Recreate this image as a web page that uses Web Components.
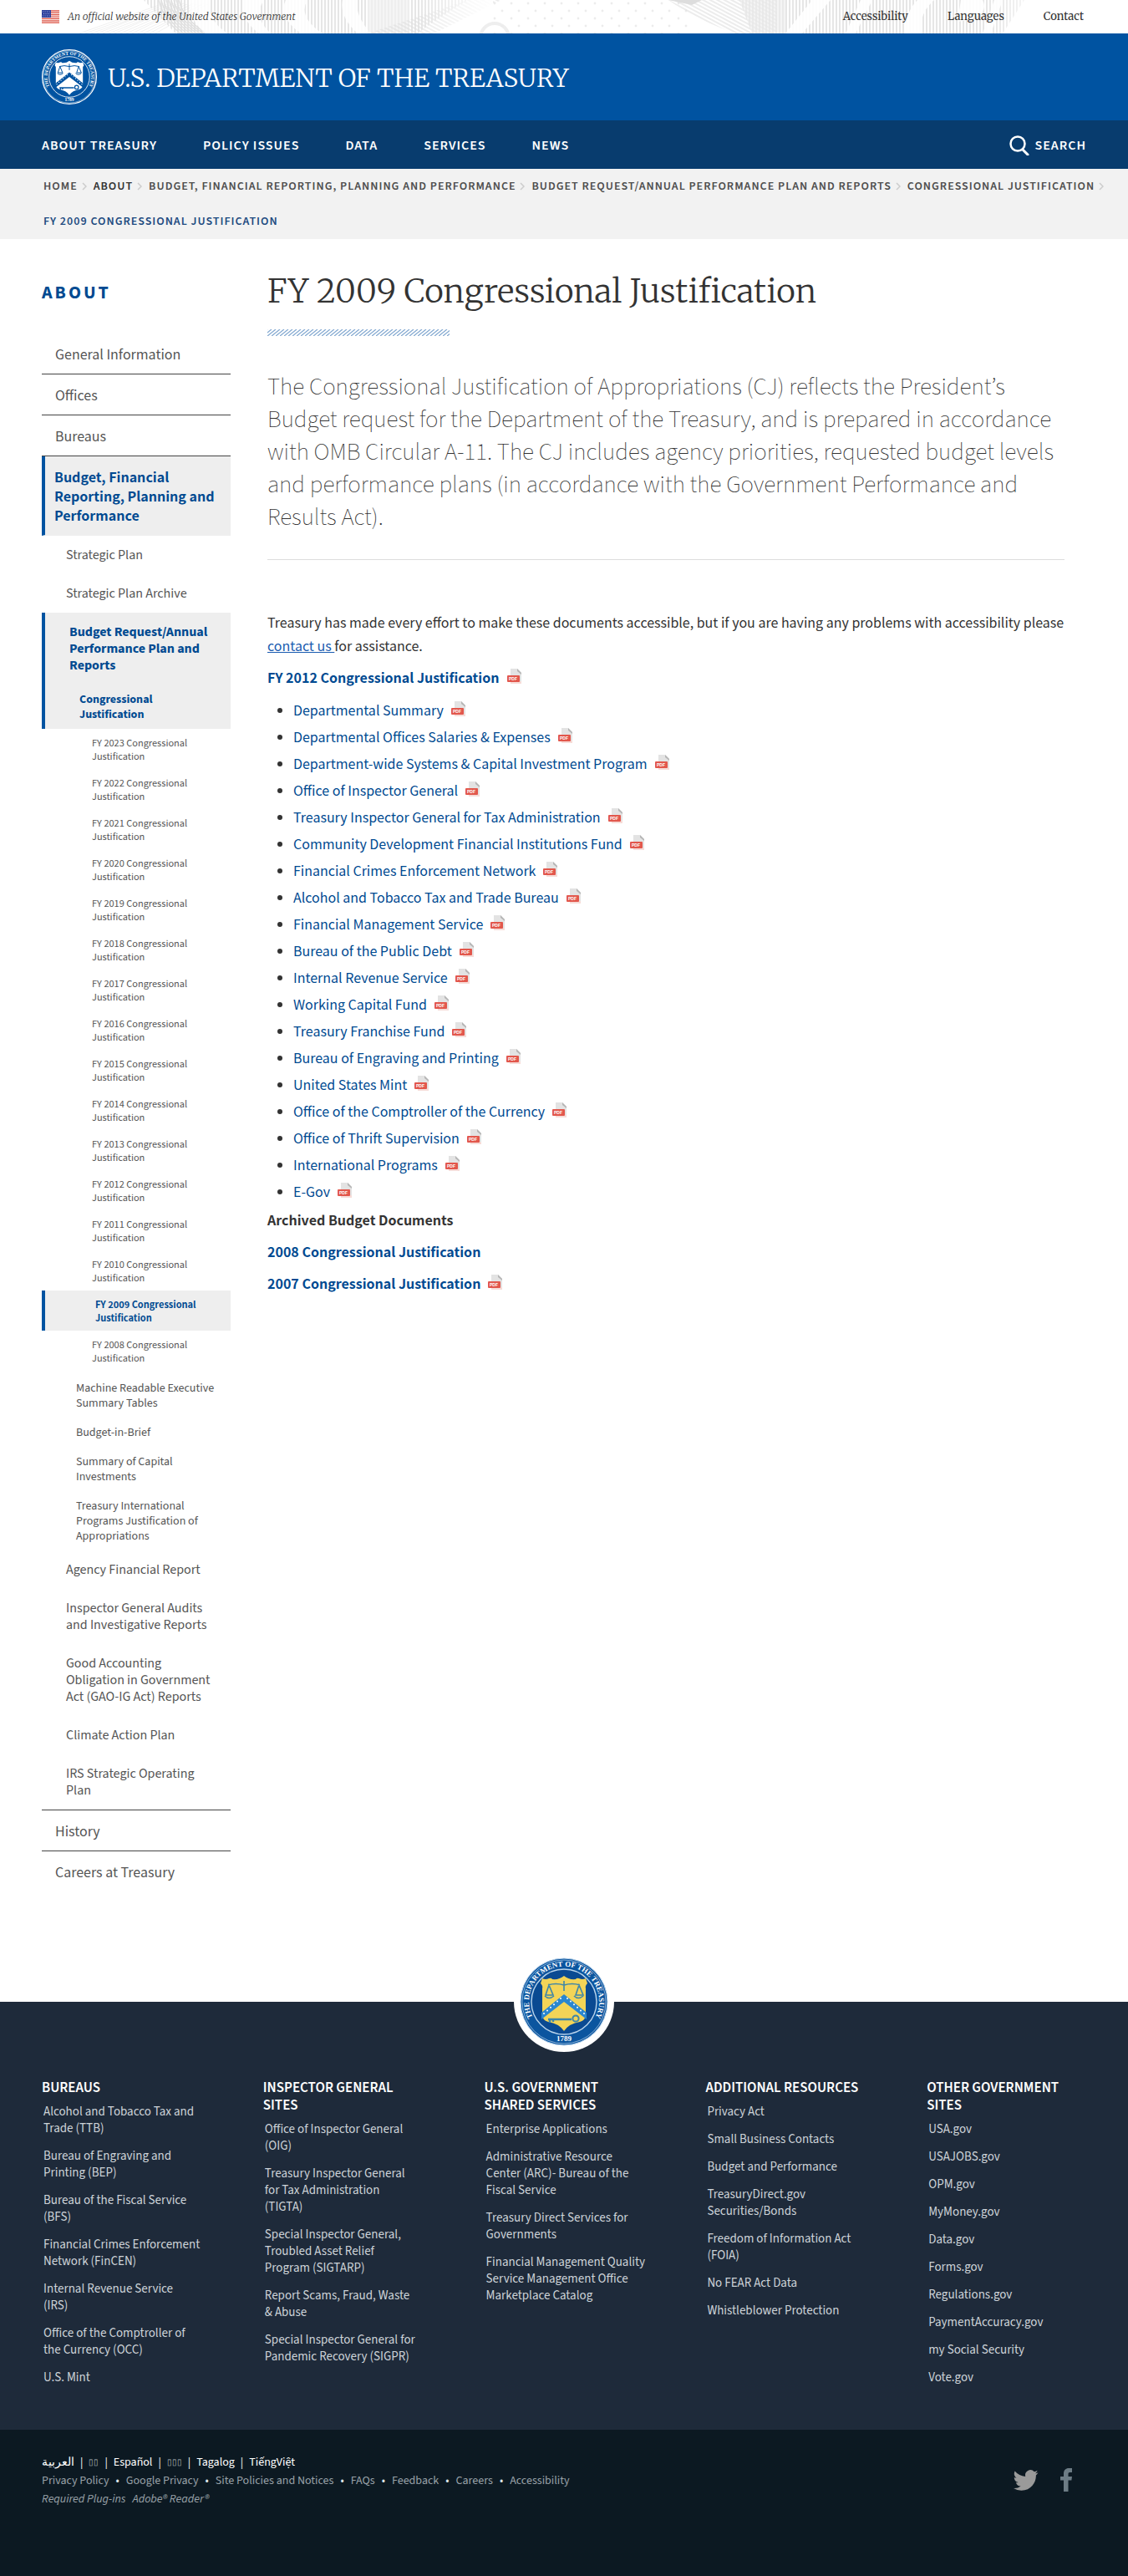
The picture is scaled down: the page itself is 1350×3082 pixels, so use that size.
<!DOCTYPE html>
<html lang="en">
<head>
<meta charset="utf-8">
<title>FY 2009 Congressional Justification | U.S. Department of the Treasury</title>
<style>
:root{
  --sans:"Source Sans 3","Noto Sans CJK SC",sans-serif;
  --body:"Noto Sans CJK SC","Source Sans 3",sans-serif;
  --serif:Merriweather,"Liberation Serif",serif;
  --link:#004a91;
}
body{margin:0;background:#fff;color:#333;font:16px/28px var(--body)}
</style>
</head>
<body>
<top-bar></top-bar>
<site-header>U.S. DEPARTMENT OF THE TREASURY</site-header>
<main-nav></main-nav>
<bread-crumbs></bread-crumbs>
<page-layout>
  <side-nav slot="side"></side-nav>
  <page-article slot="main"></page-article>
</page-layout>
<site-footer></site-footer>
<legal-bar></legal-bar>

<script>
const define = (name, html) => customElements.define(name, class extends HTMLElement {
  connectedCallback() {
    if (this.shadowRoot) return;
    const t = document.createElement('template');
    t.innerHTML = typeof html === 'function' ? html(this) : html;
    this.attachShadow({mode: 'open'}).append(t.content.cloneNode(true));
  }
});

/* Department seal: ring text, shield with scales, chevron and key */
define('treasury-seal', el => {
  const mono = el.hasAttribute('mono');
  const ring = mono ? '#0053a1' : '#0b559f', line = mono ? '#fff' : '#b9d4ec', gold = mono ? '#fff' : '#f3d457',
        ink = mono ? '#0053a1' : '#3f86a8', bar = mono ? '#0053a1' : '#2a86d0';
  let stars = '';
  for (let i = 0; i < 6; i++) {
    stars += `<circle cx="${29 + i * 4}" cy="${67 - i * 3.6}" r="1"/><circle cx="${77 - i * 4}" cy="${67 - i * 3.6}" r="1"/>`;
  }
  return `<style>:host{display:block}svg{display:block;width:100%;height:auto}text{font-family:"Liberation Serif",serif;font-weight:700;fill:#fff}</style>
  <svg viewBox="0 0 106 106" role="img" aria-label="Treasury seal">
    <defs><path id="a" d="M22 81A42 42 0 1 1 84 81"/></defs>
    <circle cx="53" cy="53" r="52" fill="${ring}" stroke="${line}" stroke-width="${mono ? 2 : 1}"/>
    <circle cx="53" cy="53" r="50" fill="none" stroke="${line}" stroke-width=".7"/>
    <circle cx="53" cy="53" r="39" fill="${mono ? ring : '#0a4a92'}" stroke="${line}" stroke-width="1.4"/>
    <text font-size="9"><textPath href="#a" startOffset="50%" text-anchor="middle">THE DEPARTMENT OF THE TREASURY</textPath></text>
    <text x="53" y="100" font-size="9" text-anchor="middle">1789</text>
    <path d="M27 25q4 2 8 0q3-1 4 1q8 1 14-4q6 5 14 4q1-2 4-1q4 2 8 0l2 6q-3 3-2 6v31q0 7-7 9q-13 2-19 11q-6-9-19-11q-7-2-7-9V37q1-3-2-6z" fill="${gold}"/>
    <path d="M26 66 53 44 80 66v8L53 53 26 74z" fill="${bar}"/>
    <g fill="#fff">${stars}</g>
    <g fill="none" stroke="${ink}" stroke-width="1.6"><path d="M34 33q9-3 19 0 10-3 19 0M53 28v12M35 33l-4 12h9zM71 33l-4 12h9z"/><path d="M30 46q5 5 11 0M65 46q5 5 11 0"/><path d="M34 74h28M36 74v4M40 74v3" stroke-width="2.4"/><circle cx="67" cy="73" r="3.6" stroke-width="2"/></g>
  </svg>`;
});

define('top-bar', () => {
  let dots = '';
  for (let r = 0; r < 5; r++) for (let i = 0; i < 12; i++)
    dots += `<circle cx="${592 + i * 20 + (r % 2) * 9}" cy="${4 + r * 9}" r="1.4"/>`;
  let rays = '';
  for (let i = 0; i < 14; i++) rays += `<path d="M${95 + i * 7} 40 ${196 + i * 4} ${4 + (i % 3)}"/>`;
  let arcs = '';
  for (let i = 0; i < 9; i++) arcs += `<path d="M${190 + i * 3} 0q6 24 ${26 + i} 40"/>`;
  return `<style>
  :host{display:flex;align-items:center;justify-content:space-between;position:relative;height:40px;padding:0 53px 0 50px;font:13px/20px var(--serif);background:#fff}
  .art{position:absolute;inset:0;width:100%;height:100%}
  .gov,nav{position:relative;display:flex;align-items:center}
  .gov{gap:10px;font-style:italic;font-size:12px;font-weight:300;color:#333}
  nav{gap:47px}a{color:#333;text-decoration:none}
  </style>
  <svg class="art" viewBox="0 0 1350 40" preserveAspectRatio="xMidYMid slice" aria-hidden="true">
    <defs>
      <pattern id="v" width="4" height="4" patternUnits="userSpaceOnUse"><path d="M1 0v4" stroke="#dcdcdc" stroke-width="1.4"/></pattern>
      <pattern id="h" width="4" height="4" patternUnits="userSpaceOnUse" patternTransform="rotate(28)"><path d="M0 1h4" stroke="#e0e0e0" stroke-width="1.2"/></pattern>
      <linearGradient id="f"><stop stop-color="#fff" stop-opacity="0"/><stop offset="1" stop-color="#fff"/></linearGradient>
    </defs>
    <g fill="none" stroke="#f0f0f0">${rays}</g>
    <path d="M172 0H560Q520 24 500 40H210Z" fill="url(#v)"/>
    <g fill="none" stroke="#e0e0e0" stroke-width="1.4">${arcs}</g>
    <path d="M226 0q0 24 20 40h26Q246 22 252 0zM292 0q-6 22 18 40h14q-22-20-8-40zM342 0q-10 20 18 40h26Q356 20 368 0zM410 0q-4 20 18 40h16Q424 18 428 0z" fill="#fff" opacity=".85"/>
    <rect x="440" width="50" height="40" fill="#f1f1f1" opacity=".7"/>
    <path d="M440 40 560 0H600L520 40z" fill="url(#h)"/>
    <rect x="500" width="90" height="40" fill="url(#f)"/>
    <circle cx="592" cy="45" r="17" fill="none" stroke="#eee" stroke-width="4"/>
    <g fill="#ececec">${dots}</g>
    <path d="M800 0H930V40H880Q830 22 800 0z" fill="url(#h)"/>
    <path d="M885 0H1226L1200 40H900z" fill="url(#v)"/>
    <path d="M885 0h55v40h-40z" fill="#ececec" opacity=".6"/>
    <path d="M800 0h40l-12 6z" fill="#ddd"/>
    <path d="M972 0h22l-34 40h-20zM1030 0h14l-20 40h-12zM1098 0h20q-20 18-14 40h-22q2-26 16-40zM1150 0h26q10 20-30 26zM1190 0h10l-14 40h-10z" fill="#fff" opacity=".9"/>
    <rect x="1180" width="80" height="40" fill="url(#f)"/>
  </svg>
  <div class="gov">
    <svg width="21" height="16" viewBox="0 0 21 16" role="img" aria-label="United States flag"><rect width="21" height="16" fill="#f7e9e6"/><path d="M0 .8h21M0 3.2h21M0 5.6h21M0 8h21M0 10.4h21M0 12.8h21M0 15.2h21" stroke="#e0584b" stroke-width="1.2"/><rect width="11" height="9" fill="#2c3f9b"/><path d="M1 2h9M2 4.500h8M1 7h9" stroke="#aab4e4" stroke-dasharray="1 1.500"/></svg>
    <span>An official website of the United States Government</span>
  </div>
  <nav aria-label="Utility"><a href="#">Accessibility</a><a href="#">Languages</a><a href="#">Contact</a></nav>`;
});

define('site-header', `<style>
  :host{display:flex;align-items:center;gap:13px;height:104px;padding:0 50px;background:#0053a1;color:#fff;font:300 30px/40px var(--serif)}
  treasury-seal{width:66px}
  a{color:inherit;text-decoration:none;padding-top:2px}
  </style><treasury-seal mono></treasury-seal><a href="#"><slot></slot></a>`);

define('main-nav', `<style>
  :host{display:flex;align-items:center;justify-content:space-between;height:56px;padding:2px 50px 0;background:#083c6e;font:600 16px/24px var(--sans);letter-spacing:1px}
  nav{display:flex;gap:55px}
  a,button{color:#fff;text-decoration:none}
  button{display:flex;align-items:center;gap:6px;font:inherit;letter-spacing:inherit;background:none;border:0;padding:0}
  </style>
  <nav aria-label="Main"><a href="#">ABOUT TREASURY</a><a href="#">POLICY ISSUES</a><a href="#">DATA</a><a href="#">SERVICES</a><a href="#">NEWS</a></nav>
  <button type="button"><svg width="24" height="24" viewBox="0 0 24 24" fill="none" stroke="#fff" stroke-width="2.500" stroke-linecap="round"><circle cx="10" cy="10" r="8.500"/><path d="m16 17 6 6" stroke-width="3"/></svg>SEARCH</button>`);

define('bread-crumbs', () => {
  const items = ['HOME', 'ABOUT', 'BUDGET, FINANCIAL REPORTING, PLANNING AND PERFORMANCE', 'BUDGET REQUEST/ANNUAL PERFORMANCE PLAN AND REPORTS', 'CONGRESSIONAL JUSTIFICATION'];
  return `<style>
  :host{display:block;background:#f2f2f2;font:600 14px/42px var(--sans);letter-spacing:1px}
  ol{display:flex;flex-wrap:wrap;list-style:none;margin:0;padding:0 16px 0 52px}
  li{display:flex;align-items:center}
  a{color:#4d4d4d;text-decoration:none}li:nth-child(2) a{color:#333}
  svg{margin:0 8px 0 5px}
  [aria-current]{color:#1d4a80}
  </style><nav aria-label="Breadcrumb"><ol>${items.map(t => `<li><a href="#">${t}</a><svg width="6" height="10" viewBox="0 0 6 10" fill="none" stroke="#ccc" stroke-width="1.500"><path d="m1 1 4 4-4 4"/></svg></li>`).join('')}<li><span aria-current="page">FY 2009 CONGRESSIONAL JUSTIFICATION</span></li></ol></nav>`;
});

define('page-layout', `<style>
  :host{display:flex;gap:44px;align-items:flex-start;padding:0 76px 132px 50px}
  .side{flex:0 0 226px}.main{flex:1;min-width:0}
  </style><div class="side"><slot name="side"></slot></div><main class="main"><slot name="main"></slot></main>`);

define('side-nav', () => {
  const li = (level, text, active) => `<li class="l${level}${active ? ' on' : ''}"><a href="#">${text}</a></li>`;
  const fy = y => li(4, `FY ${y} Congressional Justification`, y === 2009);
  const years = Array.from({length: 16}, (_, i) => 2023 - i);
  return `<style>
  :host{display:block;padding-top:50px}
  h2{margin:0 0 35px;font:700 22px/28px var(--sans);letter-spacing:3px;color:var(--link)}
  ul{list-style:none;margin:0;padding:0}
  a{display:block;color:#555;text-decoration:none}
  .l1 a{font:16px/23px var(--body);padding:13px 14px 12px 16px;border-bottom:1px solid #444}
  .l2 a{font:16px/20px var(--sans);padding:13px 15px 13px 29px}
  .l3 a{font:14px/18px var(--sans);padding:9px 15px 8px 41px}
  .l4 a{font:11px/16px var(--body);padding:8px 15px 8px 60px}
  .years{padding-bottom:3px}
  .on>a{border-left:4px solid #0053a1;background:#eee;color:var(--link);font-weight:700}
  .l1.on>a{padding-left:11px;border-bottom-color:#eee}
  .end{border-bottom:1px solid #444}
  .l1.last a{border-bottom:0}
  </style><nav aria-label="About"><h2>ABOUT</h2><ul>
  ${li(1, 'General Information')}${li(1, 'Offices')}${li(1, 'Bureaus')}${li(1, 'Budget, Financial Reporting, Planning and Performance', true)}
  ${li(2, 'Strategic Plan')}${li(2, 'Strategic Plan Archive')}${li(2, 'Budget Request/Annual Performance Plan and Reports', true)}
  ${li(3, 'Congressional Justification', true)}<li><ul class="years">${years.map(fy).join('')}</ul></li>
  ${li(3, 'Machine Readable Executive Summary Tables')}${li(3, 'Budget-in-Brief')}${li(3, 'Summary of Capital Investments')}${li(3, 'Treasury International Programs Justification of Appropriations')}
  ${li(2, 'Agency Financial Report')}${li(2, 'Inspector General Audits and Investigative Reports')}${li(2, 'Good Accounting Obligation in Government Act (GAO-IG Act) Reports')}${li(2, 'Climate Action Plan')}
  <li class="l2 end"><a href="#">IRS Strategic Operating Plan</a></li>
  ${li(1, 'History')}<li class="l1 last"><a href="#">Careers at Treasury</a></li>
  </ul></nav>`;
});

define('pdf-link', `<style>
  :host{display:inline}
  a{color:var(--link);text-decoration:none}
  svg{vertical-align:-2px;margin-left:9px}
  text{font:700 5px "Liberation Sans",sans-serif;fill:#fff}
  </style><a href="#"><slot></slot><svg width="18" height="19" viewBox="0 0 18 19" aria-hidden="true"><path d="M4 0h8l5 5v13H4z" fill="#e3e3e3"/><path d="M12 0l5 5v2l-5-4z" fill="#b5b5b5"/><path d="M4 15h13v3H4z" fill="#f6dcd8"/><rect y="8" width="15" height="8" rx="1" fill="#e2574c"/><text x="2" y="14">PDF</text></svg></a>`);

define('page-article', () => {
  const docs = ['Departmental Summary', 'Departmental Offices Salaries &amp; Expenses', 'Department-wide Systems &amp; Capital Investment Program', 'Office of Inspector General', 'Treasury Inspector General for Tax Administration', 'Community Development Financial Institutions Fund', 'Financial Crimes Enforcement Network', 'Alcohol and Tobacco Tax and Trade Bureau', 'Financial Management Service', 'Bureau of the Public Debt', 'Internal Revenue Service', 'Working Capital Fund', 'Treasury Franchise Fund', 'Bureau of Engraving and Printing', 'United States Mint', 'Office of the Comptroller of the Currency', 'Office of Thrift Supervision', 'International Programs', 'E-Gov'];
  return `<style>
  :host{display:block;padding-top:39px}
  h1{margin:0;font:300 39px/48px var(--serif);color:#333}
  .rule{display:block;width:218px;height:8px;margin:21px 0 42px}
  .lead{margin:0;font:250 29px/39px var(--sans);color:#333}
  hr{border:0;border-top:1px solid #ddd;margin:30px 0 60px}
  p{margin:0 0 10px}
  .us{color:#1a5cb0}
  ul{margin:-1px 0 4px;padding-left:31px;line-height:32px}
  b a{color:var(--link);text-decoration:none}
  </style>
  <h1>FY 2009 Congressional Justification</h1>
  <svg class="rule" aria-hidden="true"><defs><pattern id="s" width="5" height="8" patternUnits="userSpaceOnUse"><path d="M-5 8 5 0M0 8 10 0M-10 8 0 0" stroke="#7fa6cf" stroke-width="1.300"/></pattern></defs><rect width="218" height="8" fill="url(#s)"/></svg>
  <p class="lead">The Congressional Justification of Appropriations (CJ) reflects the President’s Budget request for the Department of the Treasury, and is prepared in accordance with OMB Circular A-11. The CJ includes agency priorities, requested budget levels and performance plans (in accordance with the Government Performance and Results Act).</p>
  <hr>
  <p>Treasury has made every effort to make these documents accessible, but if you are having any problems with accessibility please <a class="us" href="#">contact us </a>for assistance.</p>
  <p><b><pdf-link>FY 2012 Congressional Justification</pdf-link></b></p>
  <ul>${docs.map(d => `<li><pdf-link>${d}</pdf-link></li>`).join('')}</ul>
  <p><b>Archived Budget Documents</b></p>
  <p><b><a href="#">2008 Congressional Justification</a></b></p>
  <p><b><pdf-link>2007 Congressional Justification</pdf-link></b></p>`;
});

define('site-footer', () => {
  const cols = [
    ['BUREAUS', 'Alcohol and Tobacco Tax and Trade (TTB)', 'Bureau of Engraving and Printing (BEP)', 'Bureau of the Fiscal Service (BFS)', 'Financial Crimes Enforcement Network (FinCEN)', 'Internal Revenue Service<br>(IRS)', 'Office of the Comptroller of the Currency (OCC)', 'U.S. Mint'],
    ['INSPECTOR GENERAL SITES', 'Office of Inspector General (OIG)', 'Treasury Inspector General<br>for Tax Administration<br>(TIGTA)', 'Special Inspector General,<br>Troubled Asset Relief<br>Program (SIGTARP)', 'Report Scams, Fraud, Waste<br>&amp; Abuse', 'Special Inspector General for Pandemic Recovery (SIGPR)'],
    ['U.S. GOVERNMENT SHARED SERVICES', 'Enterprise Applications', 'Administrative Resource Center (ARC)- Bureau of the Fiscal Service', 'Treasury Direct Services for Governments', 'Financial Management Quality Service Management Office Marketplace Catalog'],
    ['ADDITIONAL RESOURCES', 'Privacy Act', 'Small Business Contacts', 'Budget and Performance', 'TreasuryDirect.gov Securities/Bonds', 'Freedom of Information Act (FOIA)', 'No FEAR Act Data', 'Whistleblower Protection'],
    ['OTHER GOVERNMENT SITES', 'USA.gov', 'USAJOBS.gov', 'OPM.gov', 'MyMoney.gov', 'Data.gov', 'Forms.gov', 'Regulations.gov', 'PaymentAccuracy.gov', 'my Social Security', 'Vote.gov']];
  return `<style>
  :host{display:block;position:relative;background:#1e2a3a;padding:93px 46px 52px 50px}
  .badge{position:absolute;left:50%;top:0;transform:translate(-50%,-50%);width:106px;padding:7px;border-radius:50%;background:#fff}
  .cols{display:grid;grid-template-columns:repeat(5,1fr);column-gap:70px}
  h3{margin:0 0 8px;font:600 17px/21px var(--sans);color:#fff}
  ul{display:flex;flex-direction:column;gap:13px;list-style:none;margin:0;padding:0 0 0 2px}
  li{font:15px/20px var(--sans)}
  a{color:#cdd3d8;text-decoration:none;display:block}
  </style><treasury-seal class="badge"></treasury-seal>
  <div class="cols">${cols.map(([h, ...l]) => `<section><h3>${h}</h3><ul>${l.map(t => `<li><a href="#">${t}</a></li>`).join('')}</ul></section>`).join('')}</div>`;
});

define('legal-bar', () => {
  const row = (items, sep) => items.map(t => `<a href="#"${t[0] === '▯' ? ' class="box"' : ''}>${t}</a>`).join(`<span>${sep}</span>`);
  return `<style>
  :host{display:flex;justify-content:space-between;background:#0c1922;padding:28px 67px 81px 50px;font:14px/22px var(--sans)}
  .row{display:flex;gap:8px}
  a{color:#98a1a8;text-decoration:none}span{color:#dfe5e9}
  .lang{gap:7px}
  .lang a,.lang span{color:#fff}
  .lang .box{font-size:10px;color:#aeb6bb}
  i{color:#98a1a8}
  .social{display:flex;gap:26px;padding-top:17px}
  svg{display:block}
  </style><div>
  <div class="row lang">${row(['العربية', '▯▯', 'Español', '▯▯▯', 'Tagalog', 'TiếngViệt'], '|')}</div>
  <div class="row">${row(['Privacy Policy', 'Google Privacy', 'Site Policies and Notices', 'FAQs', 'Feedback', 'Careers', 'Accessibility'], '•')}</div>
  <div class="row"><i>Required Plug-ins</i><a href="#"><i>Adobe® Reader®</i></a></div></div>
  <div class="social">
  <a href="#" aria-label="Twitter"><svg width="30" height="30" viewBox="0 0 24 24" fill="#9a9a9a"><path d="M23.600 4.900a9.700 9.700 0 0 1-2.800.8 4.900 4.900 0 0 0 2.100-2.700 9.800 9.800 0 0 1-3.100 1.200 4.900 4.900 0 0 0-8.400 4.500A13.900 13.900 0 0 1 1.300 3.600a4.900 4.900 0 0 0 1.500 6.500 4.900 4.900 0 0 1-2.200-.6v.1a4.900 4.900 0 0 0 3.900 4.800 4.900 4.900 0 0 1-2.200.1 4.900 4.900 0 0 0 4.600 3.400A9.900 9.900 0 0 1 0 19.900a13.900 13.900 0 0 0 7.500 2.200c9.100 0 14-7.500 14-14v-.6a10 10 0 0 0 2.100-2.600z"/></svg></a>
  <a href="#" aria-label="Facebook"><svg width="14" height="30" viewBox="0 0 14 30" fill="#6d7c85"><path d="M14 1v5h-2.500C10 6 9.500 6.800 9.500 8v3H14l-.6 4.500H9.500V29H4V15.500H0V11h4V7.500C4 3.300 6.500 1 10.200 1z"/></svg></a>
  </div>`;
});
</script>
</body>
</html>
